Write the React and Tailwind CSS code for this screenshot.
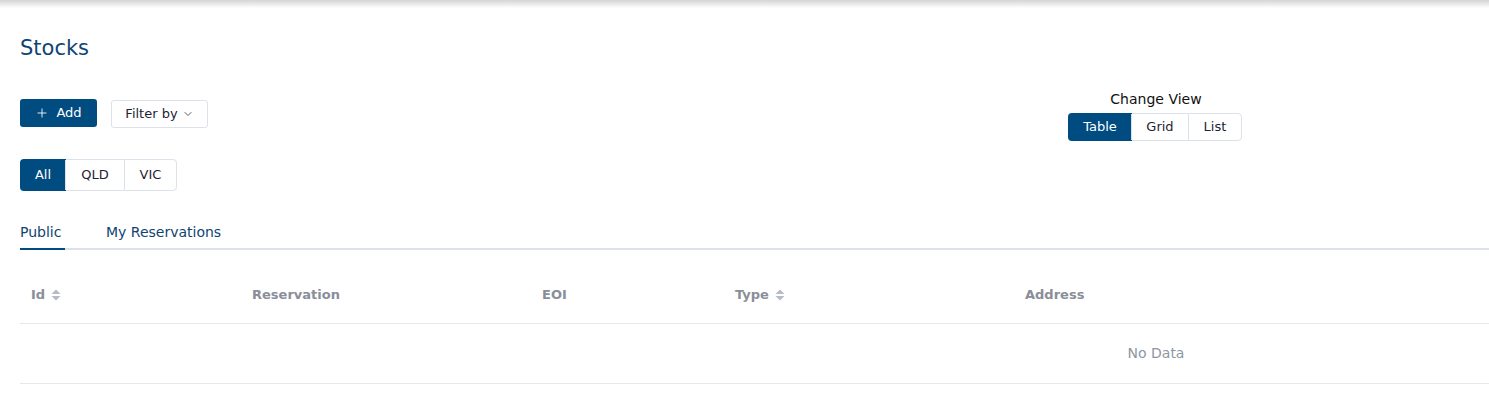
import { Plus, ChevronDown } from 'lucide-react';

const font = { fontFamily: '"DejaVu Sans", "Open Sans", sans-serif' };

function SortIcon() {
  return (
    <svg className="ml-[6px] h-[12px] w-[10px]" viewBox="0 0 10 12" fill="#b5bac6">
      <path d="M5 0.5 L9.5 5 H0.5 Z" />
      <path d="M5 11.5 L9.5 7 H0.5 Z" />
    </svg>
  );
}

function Segmented({ items, active, widths, height }) {
  return (
    <div className={`flex ${height} rounded-[4px] border border-[#dde1ea] text-[13px] text-[#1d2433]`}>
      {items.map((it, i) => (
        <div
          key={it}
          className={`${widths[i]} flex items-center justify-center ${i > 0 ? 'border-l border-[#dde1ea]' : ''} ${
            it === active ? 'bg-[#004b80] text-white' : ''
          } ${i === 0 ? '-m-px rounded-l-[4px] h-[calc(100%+2px)]' : ''}`}
        >
          {it}
        </div>
      ))}
    </div>
  );
}

const cols = [
  { label: 'Id', w: 'w-[221px]', sort: true },
  { label: 'Reservation', w: 'w-[290px]' },
  { label: 'EOI', w: 'w-[193px]' },
  { label: 'Type', w: 'w-[290px]', sort: true },
  { label: 'Address', w: 'flex-1' },
];

export default function App() {
  return (
    <div className="relative h-[414px] w-[1489px] overflow-hidden bg-white" style={font}>
      {/* top shadow */}
      <div className="h-[8px] w-full bg-gradient-to-b from-[#d4d4d4] to-white" />

      <div className="w-[2312px] px-5">
        <h1 className="mt-[27px] text-[21px] leading-[26px] text-[#0e4473]">Stocks</h1>

        {/* toolbar */}
        <div className="mt-[38px] grid grid-cols-3 items-start">
          <div className="flex items-start gap-[14px]">
            <button className="flex h-[28px] w-[77px] items-center justify-center gap-[7px] rounded-[3px] bg-[#004b80] text-[13px] text-white">
              <Plus size={14} strokeWidth={1.5} />
              Add
            </button>
            <button className="mt-px flex h-[28px] w-[97px] items-center justify-center gap-[4px] rounded-[3px] border border-[#dde1ea] text-[13px] text-[#1d2433]">
              Filter by
              <ChevronDown size={12} strokeWidth={1.5} />
            </button>
          </div>
          <div className="flex flex-col items-center">
            <div className="-mt-[9px] text-[14px] leading-[18px] text-[#111]">Change View</div>
            <div className="mt-[5px] -translate-x-px">
              <Segmented
                items={['Table', 'Grid', 'List']}
                active="Table"
                widths={['w-[64px]', 'w-[57px]', 'w-[53px]']}
                height="h-[28px]"
              />
            </div>
          </div>
          <div />
        </div>

        {/* region filter */}
        <div className="mt-[18px] flex">
          <Segmented
            items={['All', 'QLD', 'VIC']}
            active="All"
            widths={['w-[46px]', 'w-[59px]', 'w-[52px]']}
            height="h-[32px]"
          />
        </div>

        {/* tabs */}
        <div className="mt-[32px] flex border-b-2 border-[#dde1ec] text-[14px] leading-[18px]">
          <div className="-mb-[2px] w-[45px] border-b-2 border-[#004b80] pb-[7px] text-[#0e4473]">Public</div>
          <div className="ml-[41px] pb-[7px] text-[#0e4473]">My Reservations</div>
        </div>

        {/* table */}
        <div className="mt-[12px]">
          <div className="flex h-[62px] items-center border-b border-[#e6e8f0] pl-[11px] pt-[4px] text-[13px] font-bold text-[#8a8e99]">
            {cols.map((c) => (
              <div key={c.label} className={`${c.w} flex items-center`}>
                {c.label}
                {c.sort && <SortIcon />}
              </div>
            ))}
          </div>
          <div className="flex h-[60px] items-center justify-center border-b border-[#e6e8f0] text-[14px] text-[#8f96a3]">
            No Data
          </div>
        </div>
      </div>
    </div>
  );
}
